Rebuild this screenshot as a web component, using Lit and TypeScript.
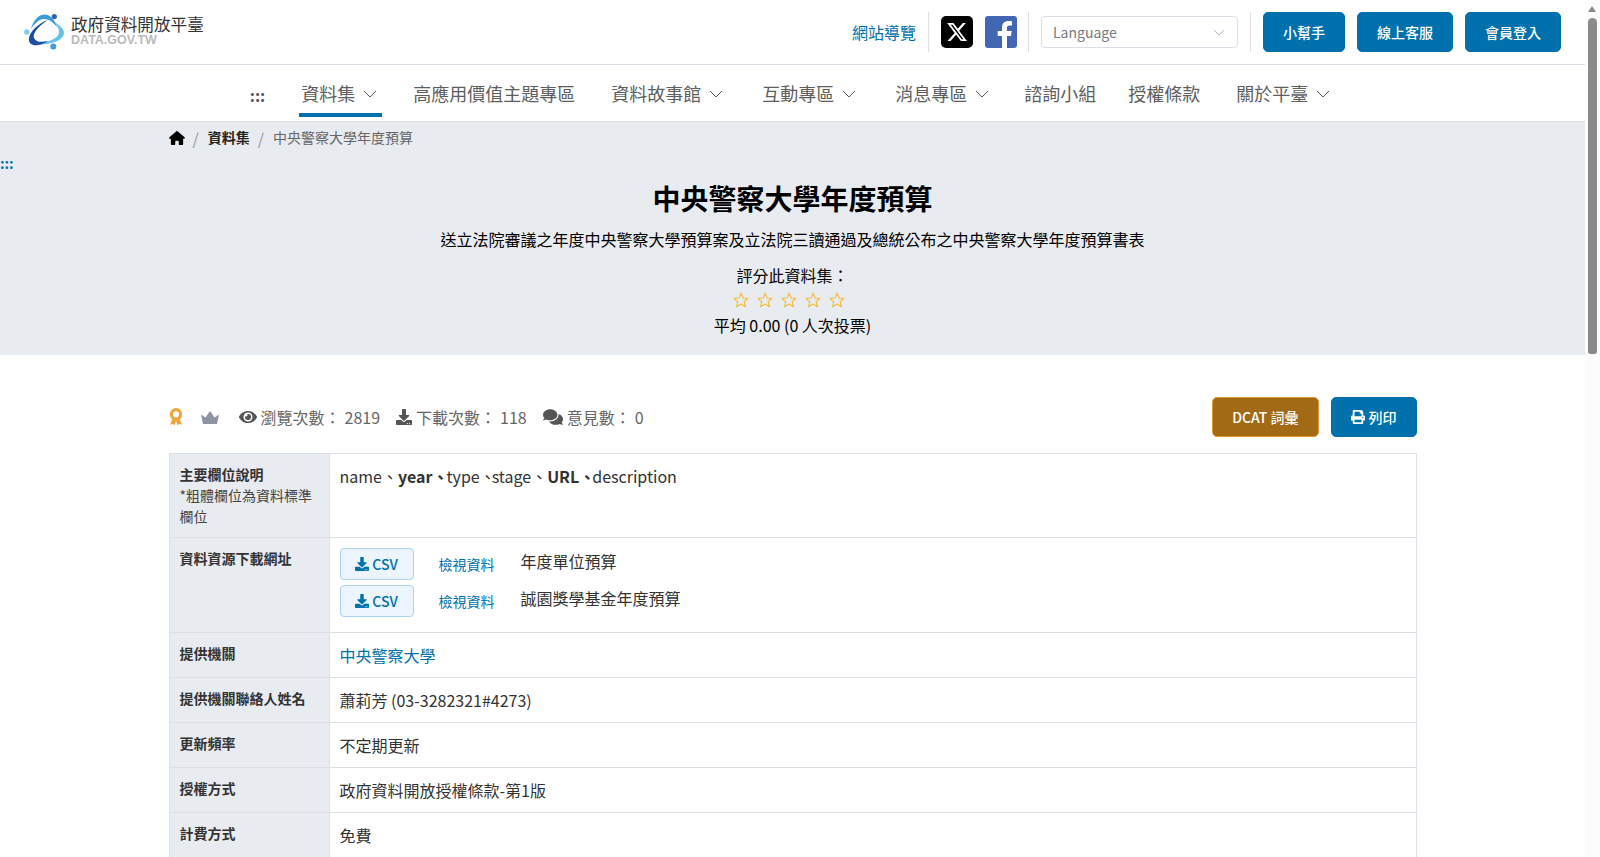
import {LitElement, html, css, svg} from 'lit';
import {customElement} from 'lit/decorators.js';

const chevron = html`<svg class="chev" viewBox="0 0 14 8" width="14" height="8"><path d="M1 1l6 6 6-6" fill="none" stroke="currentColor" stroke-width="1"/></svg>`;

const fa = (box: string, d: string, cls = '') =>
  html`<svg class="fa ${cls}" viewBox="${box}" fill="currentColor"><path d="${d}"/></svg>`;

const eye = 'M572.52 241.4C518.29 135.59 410.93 64 288 64S57.68 135.64 3.48 241.41a32.35 32.35 0 0 0 0 29.19C57.71 376.41 165.07 448 288 448s230.32-71.64 284.52-177.41a32.35 32.35 0 0 0 0-29.19zM288 400a144 144 0 1 1 144-144 143.93 143.93 0 0 1-144 144zm0-240a95.31 95.31 0 0 0-25.31 3.79 47.85 47.85 0 0 1-66.9 66.9A95.78 95.78 0 1 0 288 160z';
const download = 'M216 0h80c13.3 0 24 10.7 24 24v168h87.7c17.8 0 26.7 21.5 14.1 34.1L269.7 378.3c-7.5 7.5-19.8 7.5-27.3 0L90.1 226.1c-12.6-12.6-3.7-34.1 14.1-34.1H192V24c0-13.3 10.7-24 24-24zm296 376v112c0 13.3-10.7 24-24 24H24c-13.3 0-24-10.7-24-24V376c0-13.3 10.7-24 24-24h146.7l49 49c20.1 20.1 52.5 20.1 72.6 0l49-49H488c13.3 0 24 10.7 24 24zm-124 88c0-11-9-20-20-20s-20 9-20 20 9 20 20 20 20-9 20-20zm64 0c0-11-9-20-20-20s-20 9-20 20 9 20 20 20 20-9 20-20z';
const comments = 'M416 192c0-88.4-93.1-160-208-160S0 103.6 0 192c0 34.3 14.1 65.9 38 92-13.4 30.2-35.5 54.2-35.8 54.5-2.2 2.3-2.8 5.7-1.5 8.7S4.8 352 8 352c36.6 0 66.9-12.3 88.7-25 32.2 15.7 70.3 25 111.3 25 114.9 0 208-71.6 208-160zm122 220c23.9-26 38-57.7 38-92 0-66.9-53.5-124.2-129.3-148.1.9 6.6 1.3 13.3 1.3 20.1 0 105.9-107.7 192-240 192-10.8 0-21.3-.8-31.7-1.9C207.8 439.6 281.8 480 368 480c41 0 79.1-9.2 111.3-25 21.8 12.7 52.1 25 88.7 25 3.2 0 6.1-1.9 7.3-4.8 1.3-2.9.7-6.3-1.5-8.7-.3-.3-22.4-24.2-35.8-54.5z';
const printer = 'M448 192V77.25c0-8.49-3.37-16.62-9.37-22.63L393.37 9.37c-6-6-14.14-9.37-22.63-9.37H96C78.33 0 64 14.33 64 32v160c-35.35 0-64 28.65-64 64v112c0 8.84 7.16 16 16 16h48v96c0 17.67 14.33 32 32 32h320c17.67 0 32-14.33 32-32v-96h48c8.84 0 16-7.16 16-16V256c0-35.35-28.65-64-64-64zm-64 256H128v-96h256v96zm0-224H128V64h192v48c0 8.84 7.16 16 16 16h48v96zm48 72c-13.25 0-24-10.75-24-24 0-13.26 10.75-24 24-24s24 10.74 24 24c0 13.25-10.75 24-24 24z';
const home = 'M575.8 255.5c0 18-15 32.1-32 32.1h-32l.7 160.2c0 2.7-.2 5.4-.5 8.1V472c0 22.1-17.9 40-40 40H456c-1.1 0-2.2 0-3.3-.1c-1.4 .1-2.8 .1-4.2 .1H416 392c-22.1 0-40-17.9-40-40V448 384c0-17.7-14.3-32-32-32H256c-17.7 0-32 14.3-32 32v64 24c0 22.1-17.9 40-40 40H160 128.1c-1.5 0-3-.1-4.5-.2c-1.2 .1-2.4 .2-3.6 .2H104c-22.1 0-40-17.9-40-40V360c0-.9 0-1.9 .1-2.8V287.6H32c-18 0-32-14-32-32.1c0-9 3-17 10-24L266.4 8c7-7 15-8 22-8s15 2 21 7L564.8 231.5c8 7 12 15 11 24z';

const logo = html`<svg class="logo-mark" viewBox="0 0 41 36" width="41" height="36">
  <path d="M30 8C36 11 40 15 40 19C40 25 30 31 12 30.5C24 28 34 25 35 19C35.5 15 33 11 30 8Z" fill="#63c5ea"/>
  <path d="M7 15C9 7 14 1 20 .5C26 0 31 6 33 13C29 8 25 5 20 5C15 5 10 10 7 15Z" fill="#3b9ad9"/>
  <path d="M24 6C15 9 6 17 5 24C4 30 9 32 14 31C18 30.5 21 29 24 27C19 28 12 29 10 24C8 19 16 11 24 6Z" fill="#1c4ea1"/>
  <circle cx="2.8" cy="18" r="2.7" fill="#7fcdee"/>
  <circle cx="30.3" cy="2.6" r="2.6" fill="#2f62b5"/>
  <circle cx="29.3" cy="32.5" r="3" fill="#3f9bdc"/>
</svg>`;

const star = svg`<polygon points="8,1.3 10,6 15,6.4 11.2,9.7 12.4,14.7 8,12 3.6,14.7 4.8,9.7 1,6.4 6,6" fill="none" stroke="#f6bd3f" stroke-width="1.2" stroke-linejoin="round"/>`;

const navItems = [
  {label: '資料集', drop: true, active: true},
  {label: '高應用價值主題專區'},
  {label: '資料故事館', drop: true},
  {label: '互動專區', drop: true},
  {label: '消息專區', drop: true},
  {label: '諮詢小組'},
  {label: '授權條款'},
  {label: '關於平臺', drop: true},
];

const rows = [
  ['提供機關聯絡人姓名', '蕭莉芳 (03-3282321#4273)'],
  ['更新頻率', '不定期更新'],
  ['授權方式', '政府資料開放授權條款-第1版'],
  ['計費方式', '免費'],
];

@customElement('app-root')
export class AppRoot extends LitElement {
  static styles = css`
    :host {
      display: block;
      padding-right: 15px;
      background: #fff;
      color: #222;
      font-family: "Noto Sans CJK TC", "Noto Sans", sans-serif;
      font-size: 16px;
      line-height: 1.5;
    }
    a { color: inherit; text-decoration: none; }

    .scrollbar {
      position: fixed;
      top: 0;
      right: 0;
      bottom: 0;
      width: 15px;
      background: #fcfcfc;
    }
    .scrollbar::before {
      content: "";
      position: absolute;
      top: 6px;
      left: 3px;
      border: 4.5px solid transparent;
      border-top: 0;
      border-bottom: 6px solid #8a8a8a;
    }
    .scrollbar::after {
      content: "";
      position: absolute;
      top: 18px;
      left: 3px;
      width: 9px;
      height: 336px;
      border-radius: 5px 5px 3px 3px;
      background: #8a8a8a;
    }

    .top {
      display: flex;
      justify-content: space-between;
      align-items: center;
      height: 64px;
      padding: 0 24px;
      border-bottom: 1px solid #dcdfe8;
    }
    .brand { display: flex; align-items: center; gap: 6px; }
    .logo-mark { display: block; }
    .brand-text { padding-bottom: 2px; }
    .brand-name { font-size: 16.6px; line-height: 18px; color: #333; }
    .brand-en {
      margin-top: 1px;
      font-family: "Liberation Sans", sans-serif;
      font-weight: 700;
      font-size: 12.5px;
      line-height: 13px;
      color: #bbb;
    }
    .tools { display: flex; align-items: center; gap: 12px; }
    .sitemap { color: #0071ad; }
    .divider { width: 1px; height: 40px; background: #dcdfe8; }
    .social { display: block; }
    .social.fb { margin-right: -1px; }
    .lang {
      display: flex;
      align-items: center;
      justify-content: space-between;
      width: 197px;
      height: 32px;
      box-sizing: border-box;
      padding: 0 12px 0 11px;
      border: 1px solid #dcdfe8;
      border-radius: 4px;
      font-size: 14px;
      color: #7a7a7a;
    }
    .lang .chev { width: 12px; height: 7px; color: #aaa; }
    .btn {
      display: inline-flex;
      align-items: center;
      justify-content: center;
      gap: 4px;
      height: 40px;
      box-sizing: border-box;
      padding: 0 19px;
      border: 1px solid #0071ad;
      border-radius: 5px;
      background: #0071ad;
      color: #fff;
      font-size: 14px;
      font-weight: 500;
    }
    .btn.dcat { background: #a26a14; border-color: #df9a33; }
    .btn .fa { width: 14px; height: 14px; }

    nav {
      display: flex;
      justify-content: center;
      align-items: stretch;
      height: 56px;
      padding-left: 13px;
      border-bottom: 1px solid #dcdfe8;
      color: #5e5e5e;
      font-size: 18px;
    }
    .dots { align-self: center; margin: 3px 16px 0 1px; font-size: 16px; font-weight: 700; color: #555; }
    .nav-item { display: flex; align-items: stretch; padding: 0 16px; }
    .nav-item.drop { padding: 0 19px 0 20px; }
    .nav-link {
      display: flex;
      align-items: center;
      gap: 8px;
      padding-top: 9px;
      border-bottom: 4px solid transparent;
      margin-bottom: 4px;
    }
    .nav-item.active { padding: 0 15px 0 18px; }
    .nav-item.active .nav-link { border-bottom-color: #0071ad; padding: 9px 5px 0 2px; }

    .hero { background: #e8ebf0; height: 233px; text-align: center; }
    .crumbs {
      display: flex;
      align-items: center;
      max-width: 1248px;
      margin: 0 auto;
      height: 31px;
      font-size: 14px;
      color: #666;
    }
    .crumbs .fa { width: 16px; height: 14px; color: #000; }
    .crumbs b { color: #222; font-weight: 700; }
    .sep { color: #999; margin: 0 9px 0 8px; font-size: 16px; }
    .skip { height: 20px; font-size: 14px; font-weight: 700; line-height: 20px; color: #0071ad; text-align: left; }
    h1 { margin: 4px 0 8px; font-size: 28px; line-height: 42px; font-weight: 700; color: #000; }
    .lead { margin: 0 0 12px; color: #000; }
    .rate { color: #000; }
    .stars { display: flex; justify-content: center; gap: 8px; height: 24px; align-items: center; margin: 1px 8px 0 0; }
    .stars svg { display: block; }
    .avg { margin-top: 1px; color: #000; }

    main {
      max-width: 1248px;
      min-height: 1500px;
      margin: 0 auto;
      padding-top: 42px;
    }
    .stat-bar { display: flex; align-items: center; justify-content: space-between; margin-bottom: 16px; }
    .stats { display: flex; align-items: center; color: #666; }
    .stat { display: flex; align-items: center; gap: 4px; margin-right: 16px; }
    .stat .fa { height: 16px; color: #555; }
    .stat .eye { width: 18px; }
    .stat .down { width: 16px; }
    .stat .talk { width: 20px; height: 18px; }
    .medal { margin-right: 18px; display: block; }
    .crown { margin-right: 20px; display: block; }
    .actions { display: flex; gap: 12px; }

    table { width: 100%; border-collapse: collapse; table-layout: fixed; }
    .label-col { width: 160px; }
    th, td { border: 1px solid #dcdfe5; padding: 10px; vertical-align: top; text-align: left; }
    th { background: #e8ebf0; font-size: 14px; font-weight: 700; color: #333; line-height: 21px; }
    th span { display: block; font-weight: 400; color: #444; }
    td { color: #333; line-height: 24px; }
    td b { font-weight: 700; }
    .t2 { letter-spacing: -2px; }
    .t3 { letter-spacing: -3px; }
    .t4 { letter-spacing: -4px; }
    .link { color: #0071ad; }
    .res { display: flex; align-items: center; margin-bottom: 5px; }
    .csv {
      display: inline-flex;
      align-items: center;
      justify-content: center;
      gap: 3px;
      width: 74px;
      height: 32px;
      box-sizing: border-box;
      border: 1px solid #a9d2f5;
      border-radius: 4px;
      background: #ecf4fd;
      color: #0071ad;
      font-size: 14px;
      font-weight: 500;
    }
    .csv .fa { width: 14px; height: 14px; }
    .view { margin-left: 25px; font-size: 14px; color: #0071ad; }
    .res-name { margin-left: 26px; margin-top: -6px; }
  `;

  render() {
    return html`
      <div class="scrollbar"></div>
      <header class="top">
        <a class="brand">
          ${logo}
          <div class="brand-text">
            <div class="brand-name">政府資料開放平臺</div>
            <div class="brand-en">DATA.GOV.TW</div>
          </div>
        </a>
        <div class="tools">
          <a class="sitemap">網站導覽</a>
          <span class="divider"></span>
          <svg class="social" viewBox="0 0 32 32" width="32" height="32">
            <rect width="32" height="32" rx="5" fill="#000"/>
            <path transform="translate(5 5) scale(.92)" fill="#fff" d="M18.244 2.25h3.308l-7.227 8.26 8.502 11.24H16.17l-5.214-6.817L4.99 21.75H1.68l7.73-8.835L1.254 2.25H8.08l4.713 6.231zm-1.161 17.52h1.833L7.084 4.126H5.117z"/>
          </svg>
          <svg class="social fb" viewBox="0 0 32 32" width="32" height="32">
            <rect width="32" height="32" rx="3" fill="#4267b2"/>
            <path fill="#fff" d="M22 32V20h4l.7-5H22v-3c0-1.5.6-2.4 2.5-2.4H27V5.2c-.8-.1-2-.2-3.6-.2-3.8 0-6.4 2.3-6.4 6.5V15h-4.3v5H17v12z"/>
          </svg>
          <span class="divider"></span>
          <div class="lang">Language ${chevron}</div>
          <span class="divider"></span>
          <a class="btn">小幫手</a>
          <a class="btn">線上客服</a>
          <a class="btn">會員登入</a>
        </div>
      </header>

      <nav>
        <span class="dots">:::</span>
        ${navItems.map(item => html`
          <div class="nav-item ${item.drop ? 'drop' : ''} ${item.active ? 'active' : ''}">
            <a class="nav-link">${item.label}${item.drop ? chevron : ''}</a>
          </div>
        `)}
      </nav>

      <section class="hero">
        <div class="crumbs">
          ${fa('0 0 576 512', home)}
          <span class="sep">/</span>
          <b>資料集</b>
          <span class="sep">/</span>
          <span>中央警察大學年度預算</span>
        </div>
        <div class="skip">:::</div>
        <h1>中央警察大學年度預算</h1>
        <p class="lead">送立法院審議之年度中央警察大學預算案及立法院三讀通過及總統公布之中央警察大學年度預算書表</p>
        <div class="rate">評分此資料集：</div>
        <div class="stars">
          ${[0, 1, 2, 3, 4].map(() => html`<svg viewBox="0 0 16 16" width="16" height="16">${star}</svg>`)}
        </div>
        <div class="avg">平均 0.00 (0 人次投票)</div>
      </section>

      <main>
        <div class="stat-bar">
          <div class="stats">
            <svg class="medal" viewBox="0 0 13 17" width="14" height="18">
              <path d="M3 10.5L1 15.5l2.6-.5 1.4 1.6L6.5 12l1.5 4.6 1.4-1.6 2.6.5-2-5z" fill="#f0a63a"/>
              <circle cx="6.5" cy="6" r="4.4" fill="none" stroke="#f0a63a" stroke-width="3"/>
            </svg>
            <svg class="crown" viewBox="0 0 18 13" width="18" height="13">
              <path d="M0 3.5l4.5 3L9 0l4.5 6.5L18 3.5 16 13H2z" fill="#8f93a0"/>
            </svg>
            <div class="stat">${fa('0 0 576 512', eye, 'eye')}瀏覽次數：<span>2819</span></div>
            <div class="stat">${fa('0 0 512 512', download, 'down')}下載次數：<span>118</span></div>
            <div class="stat">${fa('0 0 576 512', comments, 'talk')}意見數：<span>0</span></div>
          </div>
          <div class="actions">
            <a class="btn dcat">DCAT 詞彙</a>
            <a class="btn">${fa('0 0 512 512', printer)}列印</a>
          </div>
        </div>

        <table>
          <colgroup><col class="label-col" /><col /></colgroup>
          <tr>
            <th>主要欄位說明<span>*粗體欄位為資料標準欄位</span></th>
            <td>name、<b>year<span class="t2">、</span></b>type<span class="t4">、</span>stage、<b>URL<span class="t3">、</span></b>description</td>
          </tr>
          <tr>
            <th>資料資源下載網址</th>
            <td>
              <div class="res">
                <a class="csv">${fa('0 0 512 512', download)}CSV</a>
                <a class="view">檢視資料</a>
                <span class="res-name">年度單位預算</span>
              </div>
              <div class="res">
                <a class="csv">${fa('0 0 512 512', download)}CSV</a>
                <a class="view">檢視資料</a>
                <span class="res-name">誠園獎學基金年度預算</span>
              </div>
            </td>
          </tr>
          <tr>
            <th>提供機關</th>
            <td><a class="link">中央警察大學</a></td>
          </tr>
          ${rows.map(([label, text]) => html`
            <tr><th>${label}</th><td>${text}</td></tr>
          `)}
        </table>
      </main>
    `;
  }
}
